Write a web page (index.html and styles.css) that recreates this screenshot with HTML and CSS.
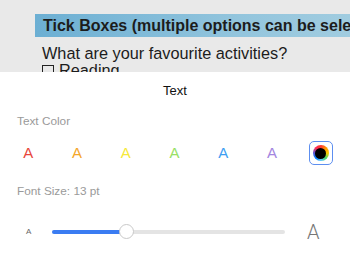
FILE: index.html
```html
<!DOCTYPE html>
<html>
<head>
<meta charset="utf-8">
<link rel="stylesheet" href="styles.css">
</head>
<body>
<div class="page">
  <div class="doc">
    <div class="doc-heading">Tick Boxes (multiple options can be selected)</div>
    <div class="doc-line">What are your favourite activities?</div>
    <div class="doc-line"><span class="box"></span>Reading</div>
  </div>
  <div class="panel">
    <div class="title">Text</div>
    <div class="label label-color">Text Color</div>
    <div class="colors">
      <span class="swatch c-red">A</span>
      <span class="swatch c-orange">A</span>
      <span class="swatch c-yellow">A</span>
      <span class="swatch c-green">A</span>
      <span class="swatch c-blue">A</span>
      <span class="swatch c-purple">A</span>
      <span class="swatch"><span class="wheel-btn"><span class="wheel"><span class="wheel-core"></span></span></span></span>
    </div>
    <div class="label label-size">Font Size: 13 pt</div>
    <div class="slider-row">
      <span class="a-small">A</span>
      <div class="track">
        <div class="fill"></div>
        <div class="knob"></div>
      </div>
      <span class="a-big">A</span>
    </div>
  </div>
</div>
</body>
</html>
```
FILE: styles.css
```css
html, body {
  margin: 0;
  padding: 0;
}
body {
  width: 350px;
  height: 258px;
  overflow: hidden;
  background: #ffffff;
  font-family: "Liberation Sans", Arial, sans-serif;
}
.page {
  width: 350px;
  height: 258px;
  overflow: hidden;
  display: flex;
  flex-direction: column;
}
.doc {
  height: 72px;
  flex: none;
  background: #e9e9e9;
  overflow: hidden;
  padding: 14px 0 0 35px;
  box-sizing: border-box;
  color: #1c1c1c;
  white-space: nowrap;
}
.doc-heading {
  height: 23px;
  line-height: 23px;
  padding-left: 8px;
  font-size: 16px;
  font-weight: bold;
  background: linear-gradient(to right, #6cafd3, #93c5dd 50%, #acd2e2);
  width: 400px;
}
.doc-line {
  padding-left: 7px;
  font-size: 16.3px;
  line-height: 17px;
}
.doc-heading + .doc-line {
  margin-top: 8px;
}
.box {
  display: inline-block;
  width: 10px;
  height: 10px;
  border: 1.3px solid #222;
  margin-right: 5px;
  vertical-align: -1px;
}
.panel {
  flex: 1;
  background: #ffffff;
  display: flex;
  flex-direction: column;
}
.title {
  margin-top: 11px;
  line-height: 16px;
  height: 16px;
  font-size: 13px;
  text-align: center;
  color: #111;
}
.label {
  padding-left: 17px;
  font-size: 11.8px;
  line-height: 14px;
  height: 14px;
  color: #9a9a9a;
}
.label-color {
  margin-top: 15px;
}
.colors {
  margin-top: 13px;
  height: 24px;
  display: flex;
  padding: 0 5px 0 4px;
}
.swatch {
  flex: 1;
  display: flex;
  justify-content: center;
  align-items: center;
  font-size: 15px;
  line-height: 24px;
  height: 24px;
}
.c-red { color: #e8463b; }
.c-orange { color: #f4a62a; }
.c-yellow { color: #f6e93a; }
.c-green { color: #98e066; }
.c-blue { color: #3d9ef2; }
.c-purple { color: #a386e0; }
.wheel-btn {
  width: 24px;
  height: 24px;
  box-sizing: border-box;
  border: 1.5px solid #5d8ff0;
  border-radius: 5px;
  display: flex;
  justify-content: center;
  align-items: center;
}
.wheel {
  width: 16px;
  height: 16px;
  border-radius: 50%;
  background: conic-gradient(#ff3b30, #ff9500, #ffcc00, #4cd964, #5ac8fa, #007aff, #5856d6, #ff2d55, #ff3b30);
  display: flex;
  justify-content: center;
  align-items: center;
}
.wheel-core {
  width: 11px;
  height: 11px;
  border-radius: 50%;
  background: #000;
}
.label-size {
  margin-top: 19px;
}
.slider-row {
  margin-top: 24px;
  height: 20px;
  display: flex;
  align-items: center;
}
.a-small {
  margin-left: 26px;
  width: 6px;
  font-size: 8px;
  color: #666;
  line-height: 10px;
}
.track {
  position: relative;
  margin-left: 20px;
  width: 233px;
  height: 4px;
  border-radius: 2px;
  background: #e4e4e4;
}
.fill {
  width: 75px;
  height: 4px;
  border-radius: 2px;
  background: #3a7cf2;
}
.knob {
  position: absolute;
  left: 67px;
  top: -6px;
  width: 13px;
  height: 13px;
  border-radius: 50%;
  background: #fff;
  border: 1.5px solid #c9c9c9;
}
.a-big {
  margin-left: 22px;
  font-family: "Roboto", "Liberation Sans", sans-serif;
  font-weight: 300;
  font-size: 20px;
  color: #777;
  line-height: 20px;
}
```
